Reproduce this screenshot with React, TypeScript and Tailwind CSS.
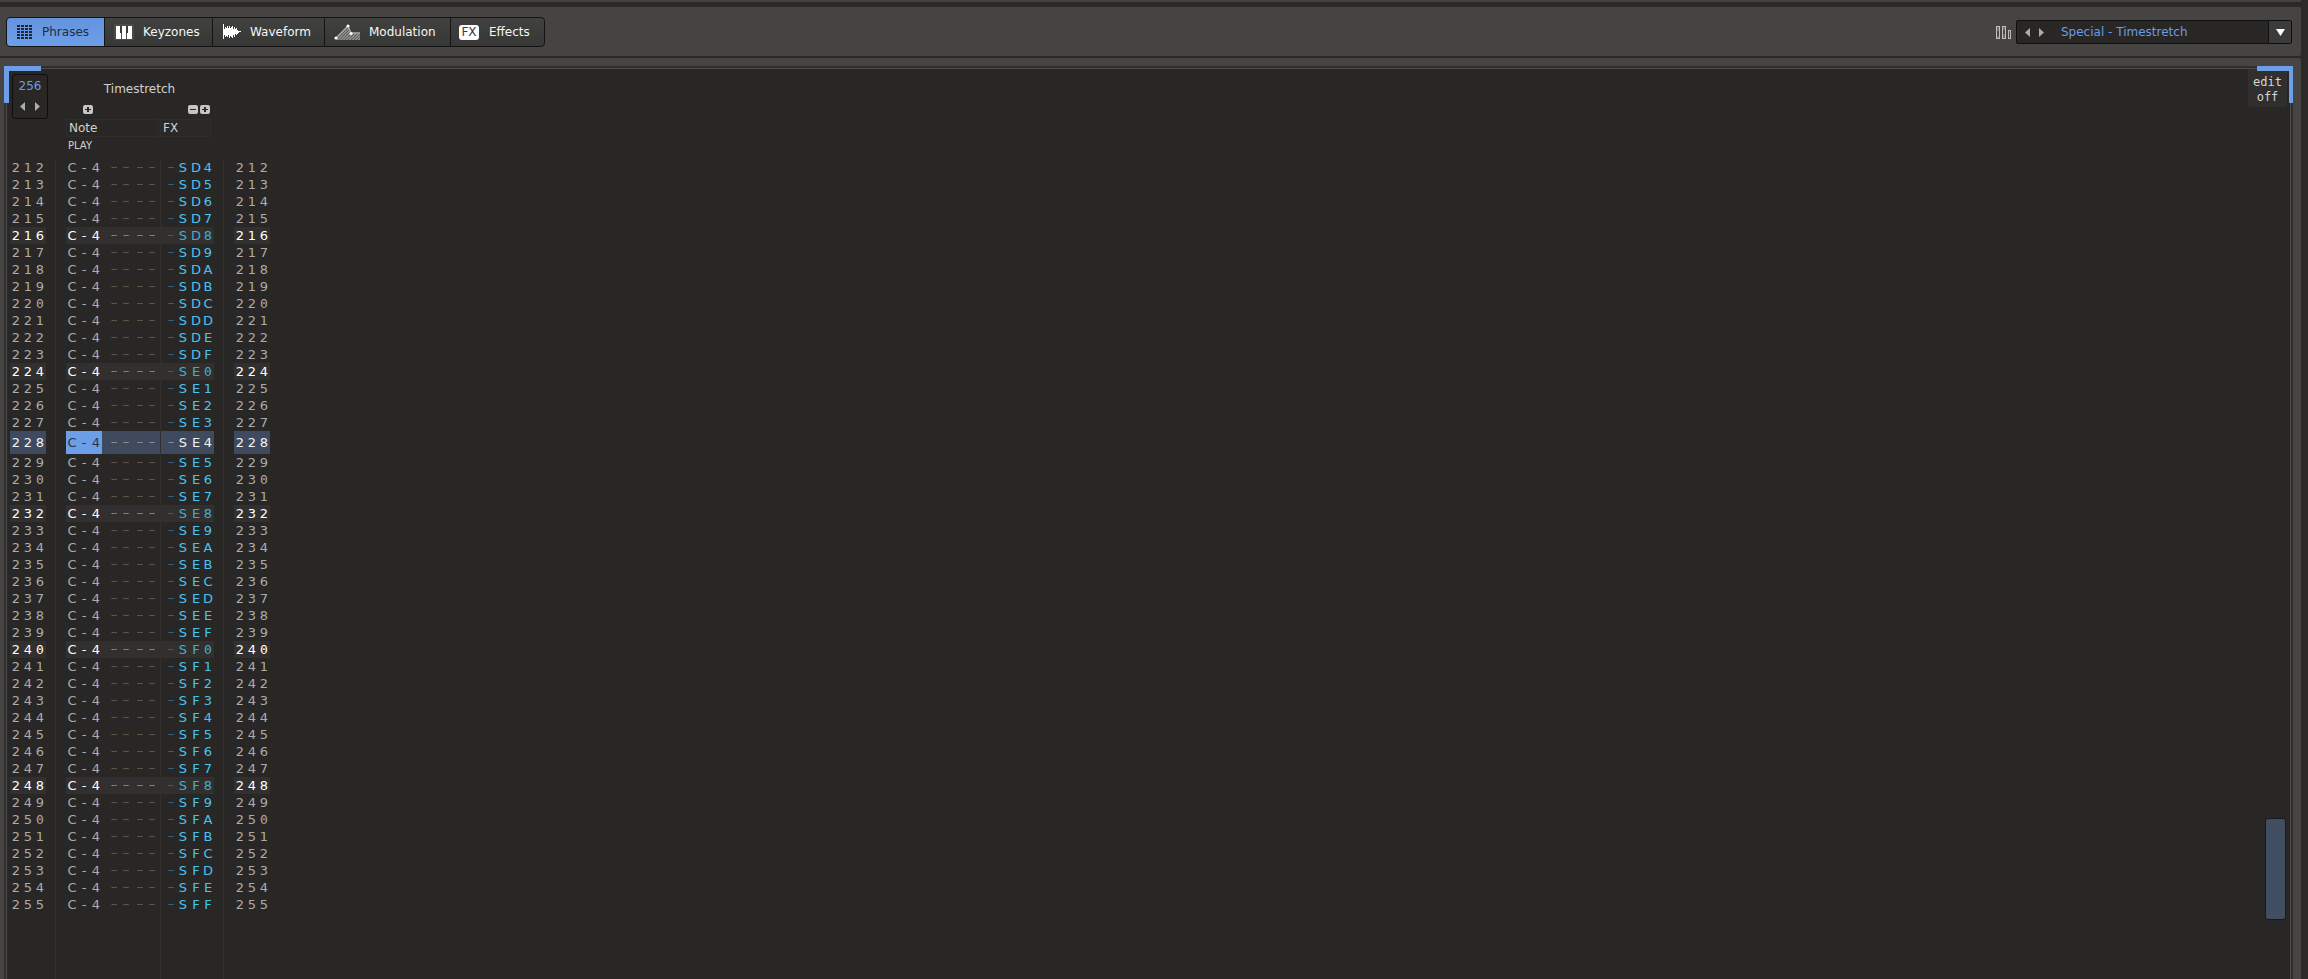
import React from "react";

const FIRST = 212;
const LAST = 255;
const CURRENT = 228;

function Cells({ text }: { text: string }) {
  return (
    <>
      {text.split("").map((c, i) => (
        <span
          key={i}
          className={
            c === "0"
              ? "w-3 text-center font-['DejaVu_Sans_Mono',monospace]"
              : c === "┄"
                ? "w-3 text-center font-['DejaVu_Sans_Mono',monospace] text-[10px] opacity-60"
                : "w-3 text-center"
          }
        >
          {c}
        </span>
      ))}
    </>
  );
}

function LineNumber({ n, tone }: { n: number; tone: string }) {
  return (
    <div className={`flex h-full w-9 items-center ${tone}`}>
      <Cells text={String(n)} />
    </div>
  );
}

function PatternRow({ n }: { n: number }) {
  const current = n === CURRENT;
  const beat = n % 8 === 0;
  const tone = current
    ? "bg-[#3f4a5f] text-[#f4f4f3]"
    : beat
      ? "bg-[#31302f] text-[#ffffff]"
      : "text-[#acabaa]";
  const fxTone = current
    ? "bg-[#3f4a5f] text-[#f4f4f3]"
    : beat
      ? "bg-[#31302f] text-[#41acd5]"
      : "text-[#48c3f0]";
  return (
    <tr className={current ? "h-[23px]" : "h-[17px]"}>
      <td className="h-[inherit] border-r border-[#343332] p-0 pl-[3px]">
        <LineNumber n={n} tone={tone} />
      </td>
      <td className="h-[inherit] border-r border-[#31302f] p-0 pl-[10px]">
        <div className={`flex h-full items-center ${tone}`}>
          <span
            className={
              current
                ? "flex h-full w-9 items-center bg-[#6c9fe8] text-[#26354d]"
                : "flex h-full w-9 items-center"
            }
          >
            <Cells text="C-4" />
          </span>
          <span className="ml-[6px] flex items-center">
            <Cells text="┄┄" />
          </span>
          <span className="ml-[2px] flex items-center">
            <Cells text="┄┄" />
          </span>
        </div>
      </td>
      <td className="h-[inherit] border-r border-[#343332] p-0 pr-[9px]">
        <div className={`flex h-full items-center justify-end ${fxTone}`}>
          <Cells text="┄S" />
          <span className="ml-px flex items-center">
            <Cells text={n.toString(16).toUpperCase()} />
          </span>
        </div>
      </td>
      <td className="h-[inherit] p-0 pl-[10px]">
        <LineNumber n={n} tone={tone} />
      </td>
    </tr>
  );
}

function PhrasesIcon() {
  return (
    <svg width="15" height="14" viewBox="0 0 15 14" fill="#1d2735" shapeRendering="crispEdges">
      {[0, 1, 2, 3, 4].map((r) =>
        [0, 1, 2, 3].map((c) => (
          <rect key={`${r}-${c}`} x={c * 4} y={r * 3} width="3" height="2" />
        )),
      )}
    </svg>
  );
}

function KeysIcon() {
  return (
    <svg width="20" height="16" viewBox="0 0 20 16" shapeRendering="crispEdges">
      <rect width="20" height="16" rx="1" fill="#4b4b4a" />
      <rect x="2" y="2" width="5" height="13" fill="#fff" />
      <rect x="8" y="2" width="4" height="13" fill="#fff" />
      <rect x="13" y="2" width="5" height="13" fill="#fff" />
      <rect x="6" y="2" width="2" height="7" fill="#3c3c3b" />
      <rect x="12" y="2" width="2" height="7" fill="#3c3c3b" />
    </svg>
  );
}

function WaveIcon() {
  const bars = [15, 6, 10, 8, 11, 7, 12, 8, 10, 12, 6, 10, 5, 7, 4, 2, 1, 1];
  return (
    <svg width="18" height="16" viewBox="0 0 18 16" fill="#fff" shapeRendering="crispEdges">
      {bars.map((h, i) => (
        <rect key={i} x={i} y={Math.floor((16 - h) / 2)} width="1" height={h} />
      ))}
    </svg>
  );
}

function ModulationIcon() {
  return (
    <svg width="26" height="16" viewBox="0 0 26 16">
      <defs>
        <pattern id="hatch" width="3" height="3" patternUnits="userSpaceOnUse">
          <rect width="3" height="3" fill="#8a8a89" />
          <path d="M0 3L3 0" stroke="#5e5e5d" strokeWidth="1" />
        </pattern>
      </defs>
      <path d="M2 14L14 2L17 9H26V16H2Z" fill="url(#hatch)" />
      <path d="M2 14L14 2L17 9H26" fill="none" stroke="#a9a9a8" strokeWidth="1.3" />
      <circle cx="2" cy="14" r="1.6" fill="#fff" />
      <circle cx="14" cy="2" r="1.6" fill="#fff" />
      <circle cx="17" cy="9.5" r="1.6" fill="#fff" />
    </svg>
  );
}

function Arrow({ dir }: { dir: "left" | "right" }) {
  return (
    <svg width="5" height="9" viewBox="0 0 5 9" fill="#a9adab">
      <path d={dir === "left" ? "M5 0V9L0 4.5Z" : "M0 0V9L5 4.5Z"} />
    </svg>
  );
}

function MiniButton({ label, plus }: { label: string; plus: boolean }) {
  return (
    <button
      type="button"
      aria-label={label}
      className="flex h-[9px] w-[10px] items-center justify-center rounded-[2px] bg-[#c6c5c3]"
    >
      <svg width="6" height="5" viewBox="0 0 6 5" fill="#2a2928" shapeRendering="crispEdges">
        <rect y="2" width="6" height="1" />
        {plus && <rect x="2" width="2" height="5" />}
      </svg>
    </button>
  );
}

const idle = "text-[#f6f6f6] bg-linear-to-b from-[#414140] to-[#373736]";

const tabs = [
  {
    label: "Phrases",
    icon: <PhrasesIcon />,
    style: "w-[99px] gap-[10px] pl-[10px] rounded-l-[4px] bg-linear-to-b from-[#6493dc] to-[#6d9fe9] text-[#1f2d45]",
  },
  { label: "Keyzones", icon: <KeysIcon />, style: `w-[109px] gap-[9px] pl-[9px] ${idle}` },
  { label: "Waveform", icon: <WaveIcon />, style: `w-[113px] gap-[9px] pl-[10px] ${idle}` },
  { label: "Modulation", icon: <ModulationIcon />, style: `w-[127px] gap-[9px] pl-[9px] ${idle}` },
  {
    label: "Effects",
    icon: (
      <span className="flex h-[15px] w-5 items-center justify-center rounded-[3px] bg-white text-[12px] leading-none text-[#3a3a39]">
        FX
      </span>
    ),
    style: `w-[95px] gap-[10px] pl-[8px] rounded-r-[4px] ${idle}`,
  },
];

export default function App() {
  const rows = Array.from({ length: LAST - FIRST + 1 }, (_, i) => FIRST + i);
  return (
    <div className="flex min-h-screen flex-col bg-[#2b2a29] pr-[7px] font-['DejaVu_Sans',sans-serif] text-[12px] text-[#d2d1cf]">
      <div className="mb-[5px] h-[2px] bg-[#434241]" />

      <header className="mb-[2px] flex h-[49px] items-center justify-between rounded-r-[2px] bg-[#454443] pt-px pr-[9px] pl-[6px]">
        <nav className="flex">
          {tabs.map((t) => (
            <button
              key={t.label}
              type="button"
              className={`-mr-px flex h-[30px] items-center border border-[#141414] leading-none ${t.style}`}
            >
              {t.icon}
              <span>{t.label}</span>
            </button>
          ))}
        </nav>

        <div className="flex items-center gap-[5px]">
          <svg width="15" height="13" viewBox="0 0 15 13" shapeRendering="crispEdges">
            <rect width="4" height="13" fill="#bdbdbb" />
            <rect x="1" y="1" width="2" height="11" fill="#6e6e6c" />
            <rect x="1" y="5" width="2" height="5" fill="#4a4a49" />
            <rect x="6" width="4" height="13" fill="#bdbdbb" />
            <rect x="7" y="1" width="2" height="11" fill="#6e6e6c" />
            <rect x="7" y="4" width="2" height="4" fill="#4a4a49" />
            <rect x="12" y="4" width="3" height="9" fill="#bdbdbb" />
            <rect x="13" y="5" width="1" height="7" fill="#4a4a49" />
          </svg>
          <div className="relative flex h-6 w-[276px] items-center rounded-[2px] border border-[#0f0f0f] bg-[#282725]">
            <button type="button" aria-label="Previous phrase preset" className="flex w-[13px] justify-end">
              <Arrow dir="left" />
            </button>
            <button type="button" aria-label="Next phrase preset" className="ml-[9px] flex w-[15px]">
              <Arrow dir="right" />
            </button>
            <select
              aria-label="Phrase preset"
              defaultValue="Special - Timestretch"
              className="h-full min-w-0 flex-1 appearance-none bg-transparent pl-[7px] text-[12px] text-[#6c9be6] outline-none"
            >
              <option>Special - Timestretch</option>
            </select>
            <span className="pointer-events-none absolute inset-y-0 right-0 flex w-[23px] items-center justify-center border-l border-[#0f0f0f] bg-[#3c3b3b]">
              <svg width="9" height="7" viewBox="0 0 9 7" fill="#fff">
                <path d="M0 0H9L4.5 7Z" />
              </svg>
            </span>
          </div>
        </div>
      </header>

      <main className="flex flex-1 rounded-tr-[2px] bg-[#464543] pt-[8px] pr-[8px] pl-[4px]">
        <div className="relative flex flex-1 border-x-2 border-t-2 border-[#302f2e]">
          <div className="flex flex-1 border-x border-t border-[#4b4a48] bg-[#282725]">
            <div className="flex flex-1 flex-col">
              <div className="flex h-[90px] items-start">
                <div className="mt-[5px] ml-[5px] flex h-[45px] w-9 flex-col items-center rounded-[3px] border border-[#0e0e0e]">
                  <input
                    type="text"
                    aria-label="Number of lines"
                    defaultValue="256"
                    className="mt-[4px] h-[15px] w-full bg-transparent text-center text-[12px] leading-[15px] text-[#6c9be6] outline-none"
                  />
                  <div className="mt-[8px] flex gap-[10px]">
                    <button type="button" aria-label="Fewer lines" className="flex">
                      <Arrow dir="left" />
                    </button>
                    <button type="button" aria-label="More lines" className="flex">
                      <Arrow dir="right" />
                    </button>
                  </div>
                </div>
                <div className="ml-[18px] flex w-[147px] flex-col">
                  <h1 className="mt-[13px] h-[15px] text-center leading-[15px]">Timestretch</h1>
                  <div className="mt-[8px] flex pl-[17px]">
                    <MiniButton label="Add note column" plus />
                    <span className="flex-1" />
                    <div className="flex gap-[2px] pr-[3px]">
                      <MiniButton label="Remove effect column" plus={false} />
                      <MiniButton label="Add effect column" plus />
                    </div>
                  </div>
                  <div className="mt-[5px] flex gap-px">
                    <div className="h-[18px] w-[93px] border border-[#2e2d2b] pl-[2px] leading-[17px]">Note</div>
                    <div className="h-[18px] w-[51px] border border-[#2e2d2b] bg-[#2a2928] pl-[2px] leading-[17px]">FX</div>
                  </div>
                  <div className="mt-[3px] pl-[2px] text-[10px] leading-[12px]">PLAY</div>
                </div>
              </div>

              <div className="flex flex-1 flex-col">
                <table className="w-[263px] table-fixed border-separate border-spacing-0 text-[13px] leading-none">
                  <colgroup>
                    <col className="w-[49px]" />
                    <col className="w-[105px]" />
                    <col className="w-[63px]" />
                    <col className="w-[46px]" />
                  </colgroup>
                  <tbody>
                    {rows.map((n) => (
                      <PatternRow key={n} n={n} />
                    ))}
                  </tbody>
                </table>
                <div className="flex flex-1">
                  <div className="w-[49px] border-r border-[#343332]" />
                  <div className="w-[105px] border-r border-[#31302f]" />
                  <div className="w-[63px] border-r border-[#343332]" />
                </div>
              </div>
            </div>

            <div className="flex w-[42px] flex-col items-end justify-between pr-[3px] pb-[59px]">
              <button
                type="button"
                className="w-[39px] rounded-b-[3px] bg-[#302f2e] pt-[6px] pb-[2px] text-center font-['DejaVu_Sans_Mono',monospace] text-[12px] leading-[15px] text-[#d6d5d3]"
              >
                edit
                <br />
                off
              </button>
              <div className="mr-px h-[102px] w-[21px] rounded-[3px] border border-[#161922] bg-[#414d61]" />
            </div>
          </div>

          <div className="absolute -top-[2px] -left-[2px] h-[37px] w-[37px] border-t-[5px] border-l-[5px] border-[#6c9fe8]" />
          <div className="absolute -top-[2px] -right-[2px] h-[37px] w-[36px] border-t-[5px] border-r-4 border-[#6c9fe8]" />
        </div>
      </main>
    </div>
  );
}
